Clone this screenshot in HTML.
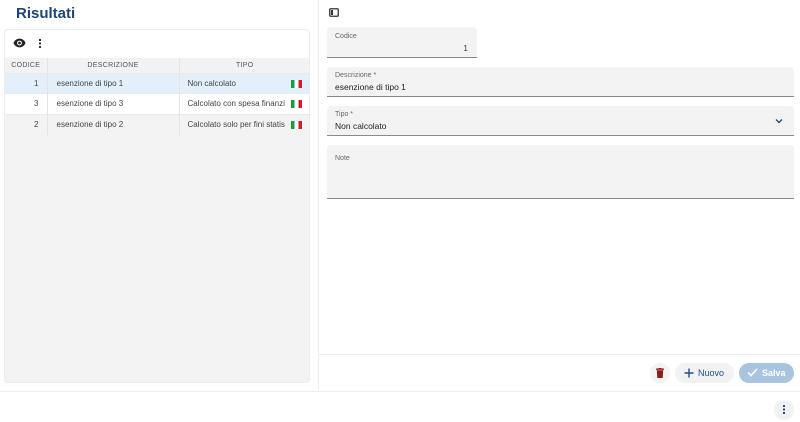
<!DOCTYPE html>
<html><head><style>
*{box-sizing:border-box;margin:0;padding:0}
body{width:800px;height:422px;background:#fff;font-family:"Liberation Sans",sans-serif;position:relative;overflow:hidden;color:#222}
.abs{position:absolute}
h1{position:absolute;left:16px;top:5px;font-size:15px;font-weight:bold;color:#1d4570}
.card{left:4px;top:29px;width:306px;height:354px;background:#f3f3f3;border-radius:4px;border:1px solid #ececec;overflow:hidden}
.tb{height:28px;background:#fff}
table{border-collapse:collapse;width:306px;font-size:8px}
th{height:15px;font-weight:normal;color:#555;font-size:7px;letter-spacing:.3px;background:#f2f2f2;border-right:1px solid #e4e4e4}
td{height:20.5px;border-right:1px solid #e4e4e4;border-top:1px solid #eaeaea;color:#444;white-space:nowrap;overflow:hidden}
tr.sel td{background:#e3f0fc}
tr.w td{background:#fff}
tr.g td{background:#f3f3f3}
.flag{display:inline-block;width:11px;height:8px;background:linear-gradient(90deg,#1a9b3c 33%,#fff 33%,#fff 66%,#c8202f 66%);vertical-align:middle}
.f{background:#f3f3f3;border-radius:4px 4px 0 0;border-bottom:1px solid #8a8a8a}
.lab{position:absolute;left:8px;font-size:7px;color:#666}
.val{position:absolute;left:8px;font-size:8.5px;color:#222}
</style></head><body>
<h1>Risultati</h1>
<div class="abs card">
 <div class="tb">
  <svg class="abs" style="left:8px;top:8px" width="13" height="10" viewBox="0 0 24 18"><path d="M12 1C6 1 2 5.5 1 9c1 3.5 5 8 11 8s10-4.5 11-8C22 5.5 18 1 12 1z" fill="#222"/><circle cx="12" cy="9" r="4.5" fill="#fff"/><circle cx="12" cy="9" r="2.5" fill="#222"/></svg>
  <div class="abs" style="left:34px;top:9px;width:2px;height:2px;background:#333;box-shadow:0 3.5px #333,0 7px #333"></div>
 </div>
 <table>
  <tr><th style="width:42px">CODICE</th><th style="width:132px">DESCRIZIONE</th><th>TIPO</th></tr>
  <tr class="sel"><td style="text-align:right;padding-right:8px">1</td><td style="padding-left:9px">esenzione di tipo 1</td><td style="padding-left:8px;position:relative">Non calcolato<span class="flag abs" style="right:8px;top:6px"></span></td></tr>
  <tr class="w"><td style="text-align:right;padding-right:8px">3</td><td style="padding-left:9px">esenzione di tipo 3</td><td style="padding-left:8px;position:relative">Calcolato con spesa finanzi<span class="flag abs" style="right:8px;top:6px"></span></td></tr>
  <tr class="g"><td style="text-align:right;padding-right:8px">2</td><td style="padding-left:9px">esenzione di tipo 2</td><td style="padding-left:8px;position:relative">Calcolato solo per fini statis<span class="flag abs" style="right:8px;top:6px;box-shadow:-3px 0 0 3px #f3f3f3"></span></td></tr>
 </table>
</div>
<div class="abs" style="left:318px;top:0;width:1px;height:391px;background:#ececec"></div>
<div class="abs" style="left:0;top:391px;width:800px;height:1px;background:#ececec"></div>
<div class="abs" style="left:319px;top:354px;width:481px;height:1px;background:#ececec"></div>
<svg class="abs" style="left:329px;top:8px" width="10" height="9" viewBox="0 0 10 9"><rect x="0.75" y="0.75" width="8.5" height="7.5" rx="1" fill="none" stroke="#333" stroke-width="1.3"/><rect x="2" y="2" width="2" height="5" fill="#333"/></svg>
<div class="abs f" style="left:327px;top:27px;width:150px;height:31px"><div class="lab" style="top:6px">Codice</div><div class="val" style="right:9px;left:auto;top:16px;color:#444">1</div></div>
<div class="abs f" style="left:327px;top:67px;width:467px;height:30px"><div class="lab" style="top:5px">Descrizione *</div><div class="val" style="top:15px">esenzione di tipo 1</div></div>
<div class="abs f" style="left:327px;top:106px;width:467px;height:30px"><div class="lab" style="top:5px">Tipo *</div><div class="val" style="top:15px">Non calcolato</div>
 <svg class="abs" style="right:11px;top:12px" width="8" height="6" viewBox="0 0 8 6"><path d="M1 1.5l3 3 3-3" fill="none" stroke="#1d4f8a" stroke-width="1.4"/></svg></div>
<div class="abs f" style="left:327px;top:145px;width:467px;height:54px"><div class="lab" style="top:10px">Note</div></div>
<div class="abs" style="left:650px;top:363px;width:20px;height:20px;border-radius:50%;background:#f2f2f2"></div>
<svg class="abs" style="left:656px;top:368px" width="8" height="10" viewBox="0 0 8 10"><rect x="0" y="0.5" width="8" height="1.3" fill="#8b1a1a"/><rect x="2.5" y="0" width="3" height="1" fill="#8b1a1a"/><path d="M0.8 2.3h6.4l-.5 7.7H1.3z" fill="#8b1a1a"/></svg>
<div class="abs" style="left:675px;top:363px;width:59px;height:20px;border-radius:10px;background:#f2f2f2;font-size:9px;color:#1d4f8a;line-height:20px;padding-left:23px">Nuovo</div>
<svg class="abs" style="left:684px;top:368px" width="10" height="10" viewBox="0 0 10 10"><path d="M5 0.5v9M0.5 5h9" stroke="#1d4f8a" stroke-width="1.4"/></svg>
<div class="abs" style="left:739px;top:363px;width:55px;height:20px;border-radius:10px;background:#a9c4de;font-size:9px;color:#fff;line-height:20px;padding-left:23px;font-weight:bold">Salva</div>
<svg class="abs" style="left:747px;top:368px" width="11" height="9" viewBox="0 0 11 9"><path d="M1 4.5l3 3 6-6.5" fill="none" stroke="#fff" stroke-width="1.5"/></svg>
<div class="abs" style="left:774px;top:400px;width:20px;height:20px;border-radius:50%;background:#f2f2f2"></div>
<div class="abs" style="left:783px;top:405px;width:2px;height:2px;background:#1d4f8a;box-shadow:0 3.5px #1d4f8a,0 7px #1d4f8a"></div>
</body></html>
